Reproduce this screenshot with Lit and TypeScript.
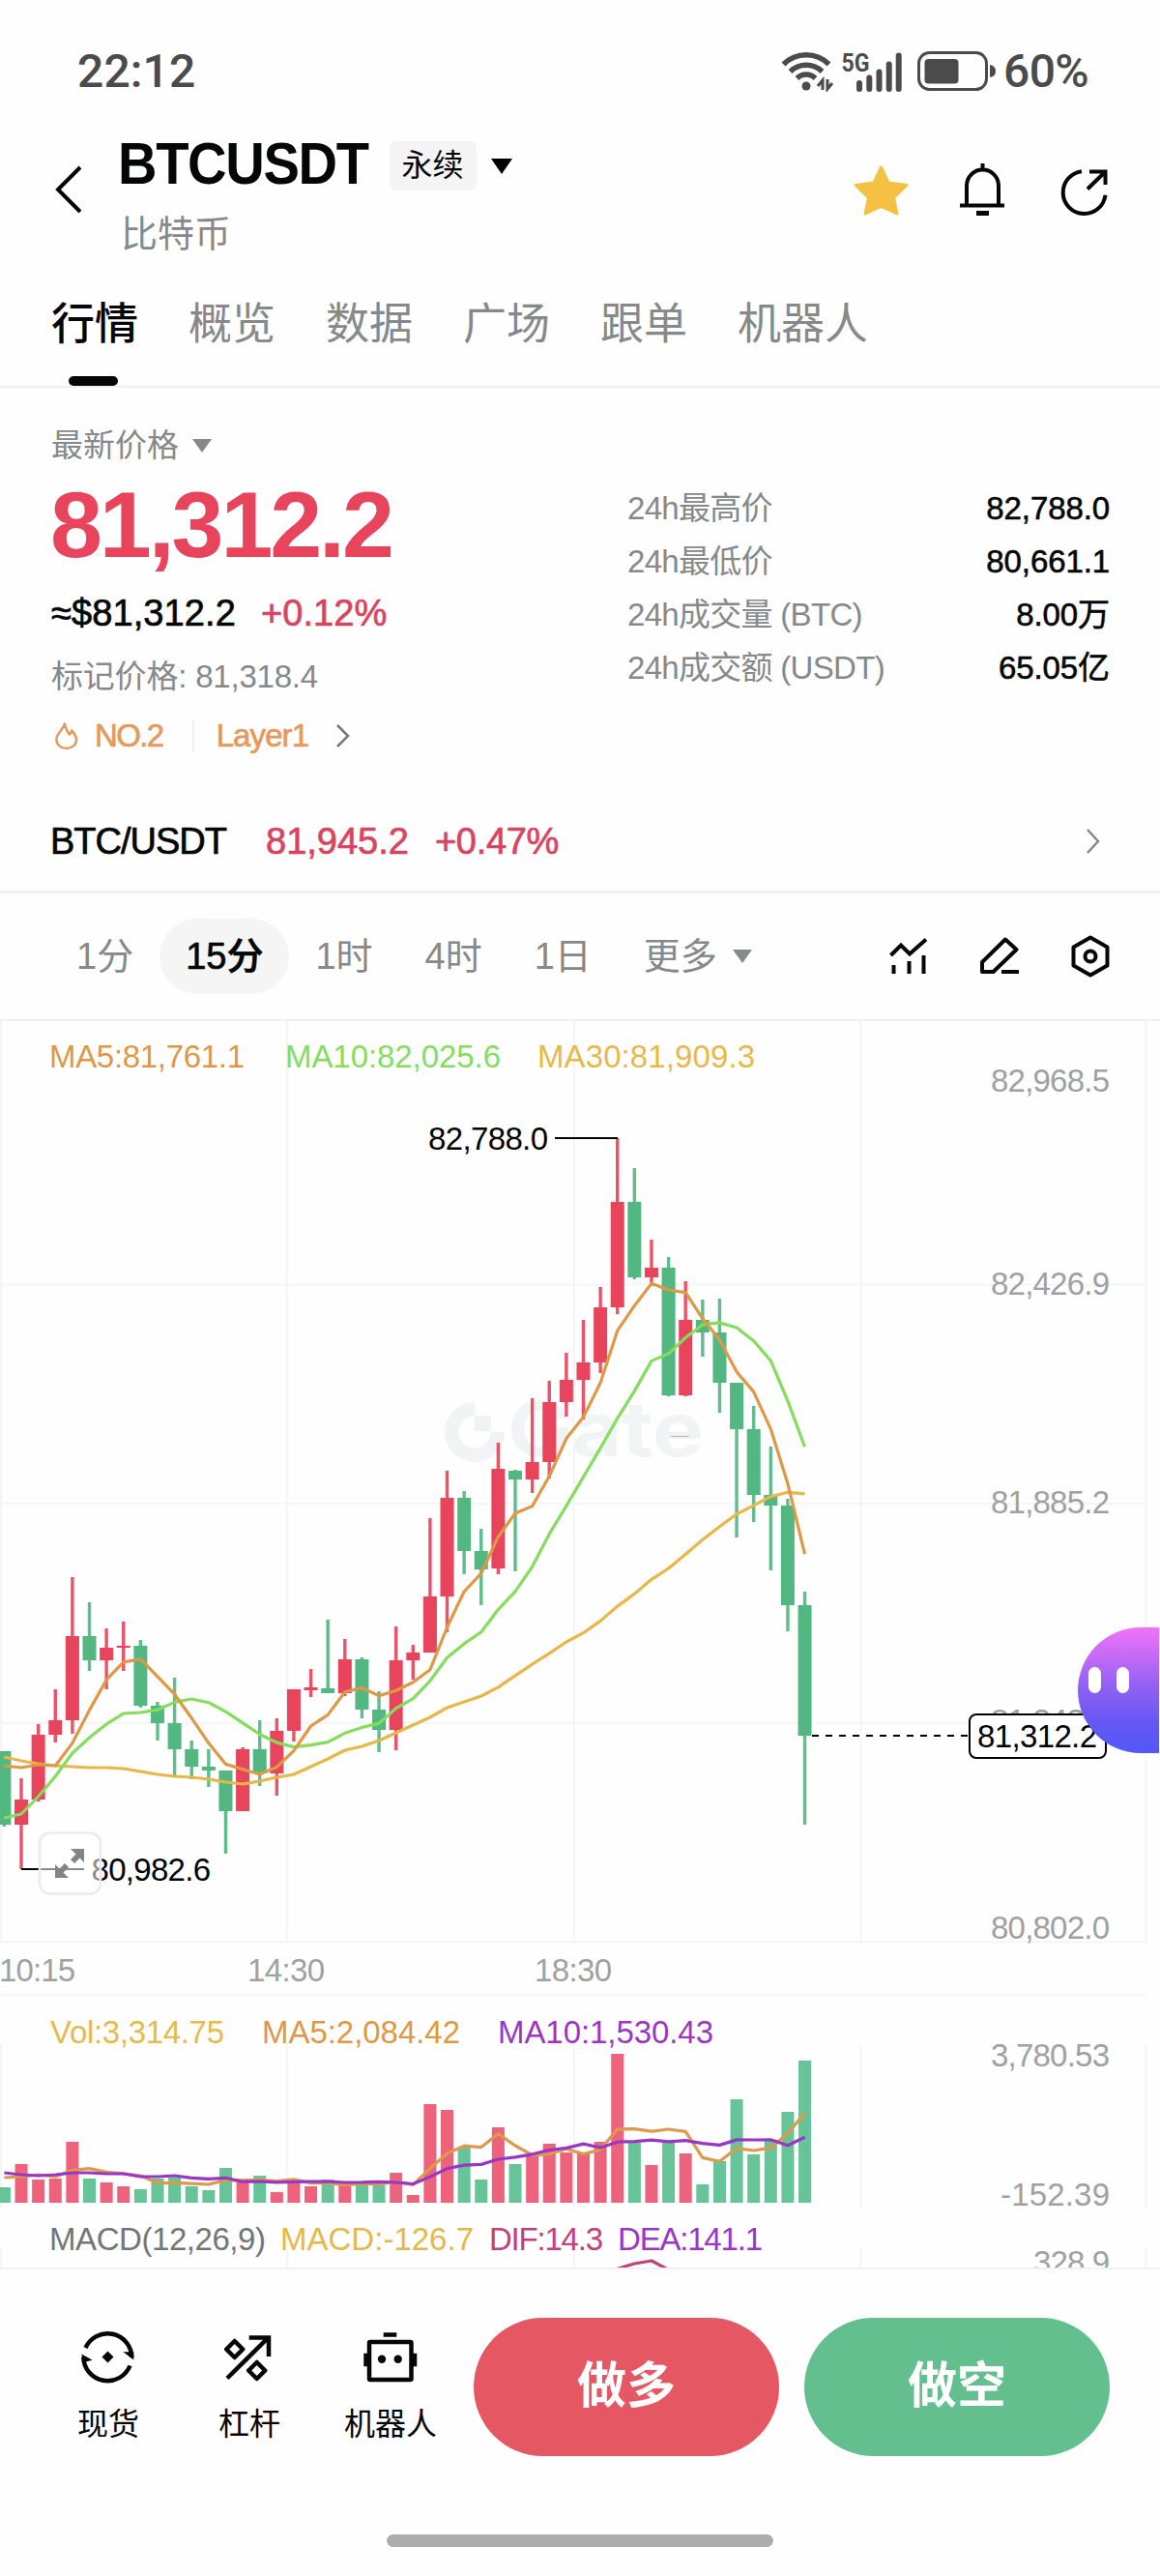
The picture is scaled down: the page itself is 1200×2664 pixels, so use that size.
import { LitElement, html, svg, css } from 'lit';
import { customElement, property } from 'lit/decorators.js';
import { classMap } from 'lit/directives/class-map.js';

const UP = '#e8445c';
const DOWN = '#53b782';
const FIRST_X = 4.4;
const STEP = 17.62;

// [direction, high, body top, body bottom, low, volume top]
const candles: [string, number, number, number, number, number][] = [
  ['d', 1811, 1811, 1887, 1889, 2262],
  ['u', 1839, 1861, 1887, 1933, 2238],
  ['u', 1783, 1794, 1861, 1863, 2254],
  ['u', 1747, 1779, 1794, 1802, 2253],
  ['u', 1631, 1692, 1779, 1793, 2215],
  ['d', 1657, 1692, 1717, 1728, 2253],
  ['u', 1684, 1704, 1717, 1747, 2257],
  ['u', 1677, 1702, 1704, 1728, 2261],
  ['d', 1696, 1702, 1764, 1766, 2264],
  ['d', 1760, 1764, 1782, 1800, 2253],
  ['d', 1735, 1782, 1809, 1836, 2252],
  ['d', 1800, 1809, 1827, 1840, 2261],
  ['d', 1809, 1827, 1831, 1848, 2265],
  ['d', 1831, 1831, 1873, 1917, 2242],
  ['u', 1807, 1809, 1873, 1873, 2254],
  ['d', 1779, 1809, 1834, 1847, 2250],
  ['u', 1777, 1790, 1834, 1857, 2267],
  ['u', 1747, 1747, 1790, 1801, 2256],
  ['u', 1726, 1745, 1748, 1755, 2261],
  ['d', 1675, 1746, 1751, 1751, 2254],
  ['u', 1695, 1716, 1751, 1754, 2260],
  ['d', 1714, 1716, 1768, 1777, 2260],
  ['d', 1749, 1768, 1789, 1812, 2260],
  ['u', 1682, 1717, 1789, 1810, 2247],
  ['u', 1701, 1709, 1717, 1737, 2270],
  ['u', 1570, 1651, 1709, 1709, 2176],
  ['u', 1521, 1549, 1651, 1688, 2182],
  ['d', 1542, 1549, 1604, 1628, 2221],
  ['d', 1581, 1604, 1623, 1660, 2254],
  ['u', 1492, 1519, 1622, 1628, 2200],
  ['d', 1520, 1521, 1530, 1625, 2238],
  ['u', 1446, 1512, 1530, 1544, 2230],
  ['u', 1428, 1450, 1512, 1529, 2217],
  ['u', 1399, 1427, 1450, 1465, 2226],
  ['u', 1365, 1409, 1427, 1468, 2227],
  ['u', 1331, 1352, 1409, 1420, 2215],
  ['u', 1177, 1243, 1352, 1359, 2124],
  ['d', 1208, 1243, 1321, 1323, 2216],
  ['u', 1282, 1311, 1321, 1330, 2239],
  ['d', 1300, 1311, 1443, 1444, 2216],
  ['u', 1325, 1365, 1443, 1444, 2227],
  ['d', 1344, 1365, 1378, 1403, 2259],
  ['d', 1343, 1378, 1430, 1461, 2235],
  ['d', 1430, 1430, 1478, 1590, 2171],
  ['d', 1454, 1478, 1546, 1574, 2228],
  ['d', 1496, 1546, 1557, 1624, 2213],
  ['d', 1550, 1557, 1660, 1687, 2184],
  ['d', 1646, 1660, 1795, 1887, 2131],
];

const closes = candles.map((c) => (c[0] === 'u' ? c[2] : c[3]));
const volumes = candles.map((c) => c[5]);
const cx = (i: number) => FIRST_X + STEP * i;

// head holds the points that need candles from before the visible range
function average(values: number[], n: number, head: number[]) {
  return values
    .map((_, i) => {
      let y = head[i];
      if (i >= head.length) {
        y = values.slice(i - n + 1, i + 1).reduce((a, b) => a + b, 0) / n;
      }
      return `${cx(i).toFixed(1)},${y.toFixed(1)}`;
    })
    .join(' ');
}

const ma5 = average(closes, 5, [1826, 1828, 1825, 1826]);
const ma10 = average(closes, 10, [1880, 1876, 1858, 1837, 1813, 1797, 1783, 1772, 1771]);
const ma30 = average(closes, 30, [
  1817, 1821, 1824, 1826, 1827, 1828, 1828, 1829, 1832, 1835, 1837, 1838, 1840, 1843, 1845,
  1842, 1838, 1835, 1827, 1819, 1810, 1806, 1800, 1792, 1784, 1776, 1766, 1760, 1754,
]);
const volMa5 = average(volumes, 5, [2252, 2251, 2249, 2251]);
const volMa10 = average(volumes, 10, [2247, 2249, 2250, 2249, 2247, 2247, 2248, 2248, 2251]);

// [text, left, baseline, width, colour]
const chartTexts: [string, number, number, number, string][] = [
  ['MA5:81,761.1', 51, 1104, 202, '#df9845'],
  ['MA10:82,025.6', 295, 1104, 223, '#84dd5c'],
  ['MA30:81,909.3', 556, 1104, 225, '#e8b94a'],
  ['82,968.5', 1025, 1129, 123, '#9fa1a1'],
  ['82,426.9', 1025, 1338.5, 123, '#9fa1a1'],
  ['81,885.2', 1025, 1564.5, 123, '#9fa1a1'],
  ['81,343.6', 1025, 1791, 123, '#9fa1a1'],
  ['80,802.0', 1025, 2005, 123, '#9fa1a1'],
  ['82,788.0', 443, 1189, 124, '#000'],
  ['80,982.6', 94.5, 1945, 123.5, '#000'],
  ['10:15', -1, 2049, 79, '#9fa1a1'],
  ['14:30', 256, 2049, 80, '#9fa1a1'],
  ['18:30', 553, 2049, 80, '#9fa1a1'],
  ['Vol:3,314.75', 52, 2113, 180, '#e6ba4d'],
  ['MA5:2,084.42', 271, 2113, 205, '#df9845'],
  ['MA10:1,530.43', 515, 2113, 223, '#9a36c6'],
  ['3,780.53', 1025, 2137, 123, '#9fa1a1'],
  ['-152.39', 1035, 2281, 113, '#9fa1a1'],
  ['MACD(12,26,9)', 51, 2327, 224, '#747676'],
  ['MACD:-126.7', 290, 2327, 200, '#e4b84b'],
  ['DIF:14.3', 506, 2327, 118, '#c5407a'],
  ['DEA:141.1', 639, 2327, 150, '#9a36c6'],
  ['328.9', 1069, 2351, 79, '#9fa1a1'],
];

@customElement('kline-chart')
export class KlineChart extends LitElement {
  static styles = css`
    :host {
      display: block;
      height: 1289px;
      position: relative;
      border-bottom: 2px solid #f1f1f1;
      overflow: hidden;
    }
    svg {
      display: block;
    }
    text {
      font-family: 'Liberation Sans', Arial, sans-serif;
      font-size: 33px;
    }
    .brand {
      font-family: Inter, sans-serif;
      font-weight: 700;
      font-size: 78px;
    }
  `;

  renderGrid() {
    return svg`
      <g stroke="#f4f5f5" stroke-width="2">
        ${[1, 297, 594, 890.5, 1185.5].map(
          (x) => svg`
            <path d="M${x} 1056V2008M${x} 2113V2284M${x} 2325V2346" />`
        )}
        ${[1328.5, 1555, 1781.7, 2008.5, 2063].map((y) => svg`<path d="M0 ${y}H1187" />`)}
      </g>`;
  }

  renderWatermark() {
    return svg`
      <g fill="#f1f4f4">
        <path d="M491 1450v14.500a16.500 16.500 0 1 0 16.500 16.500H522a31 31 0 1 1-31-31z" />
        <path fill="#f1f2f5" d="M491 1464h17v16h-17z" />
        <text class="brand" x="525" y="1506" textLength="203" lengthAdjust="spacingAndGlyphs">Gate</text>
        <path fill="#b9bcbc" d="M694 1485h19v1h-19z" />
      </g>`;
  }

  render() {
    return html`
      <svg width="1200" height="1289" viewBox="0 1056 1200 1289">
        ${this.renderGrid()} ${this.renderWatermark()}
        ${candles.map(([dir, high, top, bottom, low], i) => {
          const color = dir === 'u' ? UP : DOWN;
          return svg`
            <rect x=${cx(i) - 1.7} y=${high} width="3.4" height=${low - high} fill=${color} opacity=".92" />
            <rect x=${cx(i) - 7} y=${top} width="14" height=${bottom - top} fill=${color} />`;
        })}
        ${candles.map(
          (c, i) => svg`
            <rect x=${cx(i) - 6.5} y=${c[5]} width="13" height=${2278 - c[5]}
              fill=${c[0] === 'u' ? '#ec637b' : '#66c498'} />`
        )}
        <g fill="none" stroke-width="3.2" stroke-linejoin="round">
          <polyline points=${ma30} stroke="#e7b748" />
          <polyline points=${ma10} stroke="#84dd5c" />
          <polyline points=${ma5} stroke="#df9845" />
          <polyline points=${volMa5} stroke="#dd9a4c" />
          <polyline points=${volMa10} stroke="#9a36c6" />
          <polyline points="633,2348 656,2341 674,2338 693,2348" stroke="#c5407a" />
        </g>
        <path d="M574 1177H639M22 1933H87" stroke="#000" stroke-width="2" />
        ${chartTexts.map(
          ([label, x, y, width, color]) => svg`
            <text x=${x} y=${y} textLength=${width} fill=${color}>${label}</text>`
        )}
        <path d="M840 1795H1002" stroke="#000" stroke-width="2" stroke-dasharray="7 7" />
        <rect x="1003" y="1773" width="141" height="45" rx="7" fill="#fff" stroke="#000" stroke-width="2" />
        <text x="1011" y="1807" textLength="124">81,312.2</text>

        <rect x="41" y="1895.500" width="63" height="63" rx="11"
          fill="#fff" fill-opacity=".55" stroke="#ebebeb" stroke-width="2.5" />
        <g fill="#848484">
          <path d="M73 1912h14v14l-4.500-4.500-5.500 5.500-4-4 5.500-5.500z" />
          <path d="M71 1942H57v-14l4.500 4.500 5.500-5.500 4 4-5.500 5.500z" />
        </g>

        <defs>
          <linearGradient id="bot" x1="0" y1="0" x2="0" y2="1">
            <stop offset="0" stop-color="#f073f8" />
            <stop offset=".2" stop-color="#ca6bf6" />
            <stop offset=".5" stop-color="#8b60f4" />
            <stop offset=".75" stop-color="#6658f4" />
            <stop offset="1" stop-color="#5058f6" />
          </linearGradient>
        </defs>
        <path d="M1199 1683h-19a65 65 0 0 0 0 130h19z" fill="url(#bot)" />
        <rect x="1126" y="1724" width="13" height="27" rx="6.500" fill="#fff" />
        <rect x="1155" y="1724" width="13" height="27" rx="6.500" fill="#fff" />
      </svg>
    `;
  }
}

@customElement('stat-row')
export class StatRow extends LitElement {
  @property() label = '';
  @property() value = '';

  static styles = css`
    :host {
      display: flex;
      justify-content: space-between;
      height: 55px;
      line-height: 55px;
      font-size: 33px;
      letter-spacing: -0.7px;
    }
    .label {
      color: #868989;
    }
    .value {
      color: #050606;
      letter-spacing: -0.1px;
      -webkit-text-stroke: 0.6px;
    }
  `;

  render() {
    return html`
      <span class="label">${this.label}</span>
      <span class="value">${this.value}</span>
    `;
  }
}

@customElement('app-root')
export class AppRoot extends LitElement {
  static styles = css`
    :host {
      display: block;
      width: 1200px;
      height: 2664px;
      background: #fefefe;
      color: #050606;
      font-family: 'Liberation Sans', 'Noto Sans CJK SC', Arial, sans-serif;
      overflow: hidden;
    }
    svg {
      display: block;
      flex: none;
    }
    .medium {
      -webkit-text-stroke: 0.7px;
    }
    .gray {
      color: #868989;
    }
    .red {
      color: #d9455f;
    }

    .status {
      box-sizing: border-box;
      height: 131px;
      padding: 16px 74px 0 80px;
      display: flex;
      align-items: center;
      font-family: Roboto, sans-serif;
      font-weight: 500;
      font-size: 48px;
      color: #4b4b4b;
    }
    .time {
      flex: 1;
      font-weight: 500;
      letter-spacing: 0.1px;
    }
    .battery {
      width: 88px;
      letter-spacing: -0.6px;
    }
    .status text {
      font-family: Roboto, sans-serif;
      font-weight: 700;
      font-size: 25px;
    }

    header {
      height: 130px;
      padding: 0 50px 0 52px;
      display: flex;
      align-items: center;
    }
    .title {
      flex: 1;
      align-self: flex-start;
      padding: 15px 0 0 30px;
    }
    .pair {
      display: flex;
      height: 51px;
    }
    h1 {
      width: 280.5px;
      margin: 0;
      font-size: 62px;
      line-height: 46px;
      letter-spacing: -1.5px;
      transform: scaleX(0.905);
      transform-origin: left;
      white-space: nowrap;
    }
    .badge {
      width: 90px;
      border-radius: 6px;
      background: #f4f4f4;
      font-size: 32px;
      font-weight: 400;
      line-height: 51px;
      text-align: center;
      margin-right: 14px;
    }
    .name {
      margin: 22px 0 0 3px;
      font-size: 38px;
      line-height: 46px;
    }
    .actions {
      display: flex;
      gap: 44px;
    }

    .tabs {
      box-sizing: border-box;
      height: 140px;
      padding: 48px 0 0 53px;
      border-bottom: 2px solid #f0f0f0;
      display: flex;
      gap: 52px;
      font-size: 45px;
      line-height: 54px;
      color: #868989;
      font-weight: 400;
    }
    .tab.active {
      color: #050606;
      font-weight: 500;
    }
    .tab.active::after {
      content: '';
      display: block;
      width: 51px;
      height: 10px;
      margin: 26px 0 0 18px;
      border-radius: 5px;
      background: #050606;
    }

    .quote {
      display: flex;
      justify-content: space-between;
      height: 342px;
      padding: 38px 52px 0 53px;
    }
    .line {
      display: flex;
      align-items: center;
      height: 44px;
      line-height: 44px;
      font-size: 33px;
      white-space: nowrap;
    }
    .caret {
      margin-left: 13px;
    }
    .price {
      margin: 12px 0 0 -1px;
      font-size: 97px;
      font-weight: 700;
      line-height: 96px;
      letter-spacing: -3.1px;
      color: #e8445c;
    }
    .approx {
      margin-top: 19px;
      font-size: 38px;
      line-height: 48px;
      height: 48px;
      gap: 26px;
      letter-spacing: 0.1px;
    }
    .mark {
      margin-top: 20px;
      letter-spacing: -0.2px;
    }
    .tags {
      margin-top: 19px;
      height: 40px;
      line-height: 40px;
      font-size: 33px;
      letter-spacing: -0.9px;
      color: #e59a5b;
    }
    .rank {
      margin-left: 17px;
      letter-spacing: -1.6px;
    }
    .divider {
      width: 2px;
      height: 33px;
      background: #f0f0f0;
      margin: 0 23px 0 30px;
    }
    .stats {
      width: 499px;
      padding-top: 59px;
    }

    .spot {
      box-sizing: border-box;
      height: 143px;
      padding: 38px 60px 0 52px;
      border-bottom: 3px solid #f0f0f0;
      display: flex;
      align-items: center;
      font-size: 38px;
      line-height: 48px;
    }
    .spot .pairname {
      letter-spacing: -1px;
      margin-right: 41px;
    }
    .spot .change {
      flex: 1;
      margin-left: 27px;
      letter-spacing: -0.3px;
    }

    .frames {
      box-sizing: border-box;
      height: 132px;
      padding: 0 50px 0 79px;
      border-bottom: 2px solid #f0f0f0;
      display: flex;
      align-items: center;
      gap: 54px;
      font-size: 38px;
      line-height: 78px;
      color: #868989;
    }
    .frame.active {
      margin: 0 -27px;
      padding: 0 27px;
      border-radius: 39px;
      background: #f5f5f5;
      color: #050606;
      font-weight: 500;
      -webkit-text-stroke: 0.7px;
    }
    .more {
      display: flex;
      align-items: center;
      gap: 15px;
      flex: 1;
    }
    .tools {
      display: flex;
      gap: 50px;
    }

    .bottom {
      height: 193px;
      padding: 50px 52px 0 39px;
      display: flex;
    }
    .nav {
      width: 146px;
      padding-top: 11px;
      display: flex;
      flex-direction: column;
      align-items: center;
      font-size: 32px;
      line-height: 40px;
      gap: 19px;
    }
    .trade {
      width: 316px;
      height: 143px;
      border-radius: 72px;
      margin-left: 26px;
      color: #fff;
      font-size: 51px;
      font-weight: 700;
      line-height: 142px;
      text-align: center;
    }
    .trade.long {
      background: #e55763;
      margin-left: 13px;
    }
    .trade.short {
      background: #63c08e;
    }
    .home {
      width: 400px;
      height: 13px;
      margin: 31px auto 0;
      border-radius: 7px;
      background: #adadad;
    }
  `;

  tabs = ['行情', '概览', '数据', '广场', '跟单', '机器人'];
  frames = ['1分', '15分', '1时', '4时', '1日'];

  renderStatus() {
    return html`
      <div class="status">
        <span class="time">22:12</span>
        <svg width="230" height="42" viewBox="810 52 230 42">
          <g fill="none" stroke="#4b4b4b" stroke-width="5.500">
            <path d="M812.500 65.500a33 33 0 0 1 47 0" />
            <path d="M819.500 73a23.500 23.500 0 0 1 33 0" />
            <path d="M826.500 80a13.500 13.500 0 0 1 19 0" />
          </g>
          <circle cx="836" cy="88" r="4.500" fill="#4b4b4b" />
          <path d="M853 92V82l-5 6M858 81v10l5-6" fill="none" stroke="#4b4b4b" stroke-width="3" />
          <text x="872.500" y="72.500" textLength="29" lengthAdjust="spacingAndGlyphs" fill="#4b4b4b">5G</text>
          <path d="M891 85v6M901.300 79.500V91M911.500 73.500V91M921.700 65.500V91M931.700 56.500V91"
            stroke="#4b4b4b" stroke-width="6" stroke-linecap="round" />
          <rect x="952.500" y="53.500" width="70" height="38" rx="11" fill="none" stroke="#4b4b4b" stroke-width="3" />
          <rect x="958.500" y="60" width="35" height="25.500" rx="4" fill="#4b4b4b" />
          <path d="M1026 66q6 1 6 6.500t-6 6.500z" fill="#4b4b4b" />
        </svg>
        <span class="battery">60%</span>
      </div>
    `;
  }

  renderHeader() {
    return html`
      <header>
        <svg width="40" height="56" viewBox="0 0 40 56" fill="none" stroke="#050606" stroke-width="4">
          <path d="M31 5 8 28l23 23" />
        </svg>
        <div class="title">
          <div class="pair">
            <h1>BTCUSDT</h1>
            <span class="badge">永续</span>
            <svg width="24" height="51"><path d="M1 18h22L12 34z" /></svg>
          </div>
          <div class="name gray">比特币</div>
        </div>
        <div class="actions">
          <svg width="60" height="60" viewBox="882 166 60 60">
            <path
              d="M911.500 173l7.500 16 19 2.500-13.500 13 3.500 16.500-16.500-7.500-16.500 7.500 3.500-16.500-13.500-13 19-2.500z"
              fill="#f5c142" stroke="#f5c142" stroke-width="3" stroke-linejoin="round"
            />
          </svg>
          <svg width="60" height="60" viewBox="986 166 60 60" fill="none" stroke="#050606" stroke-width="4">
            <path d="M1000 212v-20a16.500 16.500 0 0 1 33 0v20M993 212.500h46M1016.500 169v7" />
            <path d="M1010 220.500h13" stroke-width="5" />
          </svg>
          <svg width="60" height="60" viewBox="1090 166 60 60" fill="none" stroke="#050606" stroke-width="4">
            <path d="M1119 177.200a22 22 0 1 0 24.500 24.500" />
            <path d="M1125 195.500 1143 178M1127 177.500h16.500V191" />
          </svg>
        </div>
      </header>
    `;
  }

  renderQuote() {
    return html`
      <section class="quote">
        <div>
          <div class="line gray">
            最新价格
            <svg class="caret" width="22" height="16"><path d="M1 1h20L11 15z" fill="#868989" /></svg>
          </div>
          <div class="price">81,312.2</div>
          <div class="line approx medium"><span>≈$81,312.2</span><span class="red">+0.12%</span></div>
          <div class="line mark gray">标记价格: 81,318.4</div>
          <div class="line tags medium">
            <svg width="28" height="32" viewBox="53 745 28 32" fill="none" stroke="#e59a5b" stroke-width="2.500" stroke-linejoin="round">
              <path d="M67 748.500c1 6 2 8 5 11 1.500-1 2-2.500 2-4 4 4 5 7 5 9.500a10.300 9 0 0 1-20.600 0c0-7 7-10 8.600-16.500z" />
            </svg>
            <span class="rank">NO.2</span>
            <span class="divider"></span>
            <span>Layer1</span>
            <svg width="46" height="30" fill="none" stroke="#777" stroke-width="2.500">
              <path d="M30 4l11 11-11 11" />
            </svg>
          </div>
        </div>
        <div class="stats">
          <stat-row label="24h最高价" value="82,788.0"></stat-row>
          <stat-row label="24h最低价" value="80,661.1"></stat-row>
          <stat-row label="24h成交量 (BTC)" value="8.00万"></stat-row>
          <stat-row label="24h成交额 (USDT)" value="65.05亿"></stat-row>
        </div>
      </section>
      <section class="spot medium">
        <span class="pairname">BTC/USDT</span>
        <span class="red">81,945.2</span>
        <span class="red change">+0.47%</span>
        <svg width="18" height="30" fill="none" stroke="#868989" stroke-width="2.500">
          <path d="M3 3l11 12L3 27" />
        </svg>
      </section>
    `;
  }

  renderFrames() {
    return html`
      <nav class="frames">
        ${this.frames.map(
          (f) => html`<span class=${classMap({ frame: true, active: f === '15分' })}>${f}</span>`
        )}
        <span class="more">
          更多
          <svg width="22" height="16"><path d="M1 1h20L11 15z" fill="#868989" /></svg>
        </span>
        <div class="tools">
          <svg width="44" height="44" viewBox="918 967 44 44" fill="none" stroke="#050606" stroke-width="4">
            <path d="M921.500 988l10.500-10.500 9 9L958 971.500M924.500 998v9M940.500 994v13M955.500 988v19" />
          </svg>
          <svg width="44" height="44" viewBox="1012 967 44 44" fill="none" stroke="#050606" stroke-width="4">
            <path d="M1016 1005v-10l24-23.500 11.500 10.500-24 23z" stroke-linejoin="round" />
            <path d="M1036 1005h18" />
          </svg>
          <svg width="44" height="44" viewBox="1106 968 44 44" fill="none" stroke="#050606" stroke-width="4">
            <path d="M1128 970.500l17.500 10v19l-17.500 10-17.500-10v-19z" stroke-linejoin="round" />
            <circle cx="1128" cy="990" r="5.500" />
          </svg>
        </div>
      </nav>
    `;
  }

  renderBottom() {
    return html`
      <div class="bottom">
        <div class="nav">
          <svg width="60" height="60" viewBox="82 2408 60 60" fill="none" stroke="#050606" stroke-width="4.500">
            <path d="M88.500 2428a25 25 0 0 1 47.800 10M134.500 2446.500a25 25 0 0 1-48.200-9" />
            <path d="M129.500 2433l8 6V2433zM93.500 2440.500l-8-4.500 1.500 6z" fill="#050606" stroke-width="1.500" />
            <path d="M111.500 2431.500l6 6-6 6-6-6z" fill="#050606" stroke="none" />
          </svg>
          <span>现货</span>
        </div>
        <div class="nav">
          <svg width="60" height="60" viewBox="228 2408 60 60" fill="none" stroke="#050606" stroke-width="4.500">
            <path d="M235 2459.500l42.500-42M257.700 2417.500h20.300V2437" />
            <path d="M242.700 2421l8.500 8.500-8.500 8.500-8.500-8.500zM265.700 2443l8.500 8.500-8.500 8.500-8.500-8.500z" stroke-linejoin="round" />
          </svg>
          <span>杠杆</span>
        </div>
        <div class="nav">
          <svg width="60" height="60" viewBox="374 2408 60 60" fill="none" stroke="#050606" stroke-width="4.500">
            <rect x="382" y="2422" width="43.500" height="39" rx="1" />
            <path d="M396.700 2414.500h13.600M378.500 2433.700v13.600M429 2433.700v13.600" />
            <circle cx="395" cy="2439.700" r="4.200" fill="#050606" stroke="none" />
            <circle cx="411.700" cy="2439.700" r="4.200" fill="#050606" stroke="none" />
          </svg>
          <span>机器人</span>
        </div>
        <div class="trade long">做多</div>
        <div class="trade short">做空</div>
      </div>
      <div class="home"></div>
    `;
  }

  render() {
    return html`
      ${this.renderStatus()} ${this.renderHeader()}
      <nav class="tabs">
        ${this.tabs.map(
          (t, i) => html`<span class=${classMap({ tab: true, active: i === 0 })}>${t}</span>`
        )}
      </nav>
      ${this.renderQuote()} ${this.renderFrames()}
      <kline-chart></kline-chart>
      ${this.renderBottom()}
    `;
  }
}
